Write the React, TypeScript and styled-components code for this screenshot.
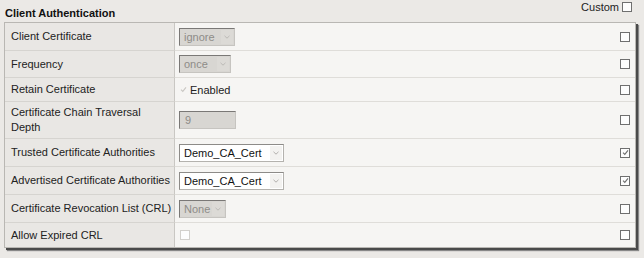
import React from "react";
import styled, { createGlobalStyle } from "styled-components";

const Global = createGlobalStyle`
  html, body { margin: 0; padding: 0; background: #ebe9e6; }
  body { font-family: "Liberation Sans", Arial, sans-serif; font-size: 11px; color: #222; }
`;

const Page = styled.div`
  width: 644px;
  height: 258px;
  box-sizing: border-box;
  padding: 0 8px 0 4px;
  background: #ebe9e6;
`;

const Header = styled.div`
  height: 22px;
  display: flex;
  align-items: flex-end;
  justify-content: space-between;
  position: relative;
`;

const Title = styled.div`
  font-weight: bold;
  font-size: 11px;
  padding: 0 0 3px 1px;
  color: #111;
`;

const CustomLabel = styled.div`
  position: absolute;
  right: 4px;
  top: 1px;
  display: flex;
  align-items: center;
  gap: 3px;
  font-size: 11px;
  color: #222;
`;

const Table = styled.div`
  border: 1px solid #b9b7b3;
  box-shadow: 2px 2px 0 #4a4a4a, 3px 3px 1px #888;
  display: grid;
  grid-template-columns: 170px 1fr;
  background: #f6f5f3;
`;

const Label = styled.div<{ $h: number; $last?: boolean }>`
  height: ${(p) => p.$h}px;
  box-sizing: border-box;
  background: #e9e7e4;
  border-right: 1px solid #c9c7c3;
  border-bottom: ${(p) => (p.$last ? "none" : "1px solid #d6d4d0")};
  padding: 0 0 0 6px;
  display: flex;
  align-items: center;
  line-height: 15px;
  font-size: 11px;
  white-space: pre-line;
  color: #222;
`;

const Value = styled.div<{ $h: number; $last?: boolean }>`
  height: ${(p) => p.$h}px;
  box-sizing: border-box;
  border-bottom: ${(p) => (p.$last ? "none" : "1px solid #dfddd9")};
  padding: 0 5px 0 4px;
  display: flex;
  align-items: center;
  position: relative;
`;

const RightBox = styled.div`
  margin-left: auto;
  display: flex;
`;

const Box = styled.span<{ $faint?: boolean }>`
  width: 8px;
  height: 8px;
  border: 1px solid ${(p) => (p.$faint ? "#d2d0cc" : "#6f6f6f")};
  background: #fdfdfd;
  display: inline-flex;
  align-items: center;
  justify-content: center;
`;

const Select = styled.div<{ $w: number; $disabled?: boolean }>`
  width: ${(p) => p.$w}px;
  height: 18px;
  box-sizing: border-box;
  display: flex;
  align-items: center;
  padding-left: 4px;
  background: ${(p) => (p.$disabled ? "#d8d6d2" : "#fff")};
  border: 1px solid ${(p) => (p.$disabled ? "#c6c4c0" : "#b4b2ae")};
  border-top-color: ${(p) => (p.$disabled ? "#7a7876" : "#8d8b88")};
  border-left-color: ${(p) => (p.$disabled ? "#7a7876" : "#8d8b88")};
  color: ${(p) => (p.$disabled ? "#8e8c88" : "#111")};
  font-size: 11px;
  position: relative;
`;

const Arrow = styled.span<{ $disabled?: boolean }>`
  position: absolute;
  right: 1px;
  top: 1px;
  bottom: 1px;
  width: 12px;
  background: ${(p) => (p.$disabled ? "#dcdad6" : "#f3f2f0")};
  display: flex;
  align-items: center;
  justify-content: center;
`;

const TextInput = styled.div`
  width: 57px;
  height: 18px;
  box-sizing: border-box;
  background: #d8d6d2;
  border: 1px solid #c6c4c0;
  border-top-color: #7a7876;
  border-left-color: #7a7876;
  color: #8e8c88;
  padding-left: 5px;
  display: flex;
  align-items: center;
`;

const Inline = styled.div`
  display: flex;
  align-items: center;
  gap: 3px;
  padding-left: 1px;
`;

const Check = ({ color = "#6f6f6f" }: { color?: string }) => (
  <svg width="7" height="7" viewBox="0 0 7 7">
    <path d="M1 3.6 L2.8 5.4 L6 1.4" fill="none" stroke={color} strokeWidth="1.1" />
  </svg>
);

const Chevron = ({ color }: { color: string }) => (
  <svg width="6" height="4" viewBox="0 0 6 4">
    <path d="M0.5 0.8 L3 3.2 L5.5 0.8" fill="none" stroke={color} strokeWidth="0.9" />
  </svg>
);

const Sel = ({ w, text, disabled }: { w: number; text: string; disabled?: boolean }) => (
  <Select $w={w} $disabled={disabled}>
    {text}
    <Arrow $disabled={disabled}>
      <Chevron color={disabled ? "#b8b6b2" : "#a9a7a4"} />
    </Arrow>
  </Select>
);

type Row = { label: string; h: number; control: React.ReactNode; checked?: boolean };

const rows: Row[] = [
  { label: "Client Certificate", h: 28, control: <Sel w={56} text="ignore" disabled /> },
  { label: "Frequency", h: 27, control: <Sel w={52} text="once" disabled /> },
  {
    label: "Retain Certificate",
    h: 24,
    control: (
      <Inline>
        <Check color="#c9c7c3" />
        <span>Enabled</span>
      </Inline>
    ),
  },
  { label: "Certificate Chain Traversal\nDepth", h: 37, control: <TextInput>9</TextInput> },
  { label: "Trusted Certificate Authorities", h: 28, control: <Sel w={105} text="Demo_CA_Cert" />, checked: true },
  { label: "Advertised Certificate Authorities", h: 28, control: <Sel w={105} text="Demo_CA_Cert" />, checked: true },
  { label: "Certificate Revocation List (CRL)", h: 28, control: <Sel w={47} text="None" disabled /> },
  { label: "Allow Expired CRL", h: 24, control: <Inline><Box $faint /></Inline> },
];

export default function App() {
  return (
    <Page>
      <Global />
      <Header>
        <Title>Client Authentication</Title>
        <CustomLabel>
          Custom <Box />
        </CustomLabel>
      </Header>
      <Table>
        {rows.map((r, i) => {
          const last = i === rows.length - 1;
          return (
            <React.Fragment key={r.label}>
              <Label $h={r.h} $last={last}>{r.label}</Label>
              <Value $h={r.h} $last={last}>
                {r.control}
                <RightBox>
                  <Box>{r.checked ? <Check /> : null}</Box>
                </RightBox>
              </Value>
            </React.Fragment>
          );
        })}
      </Table>
    </Page>
  );
}
